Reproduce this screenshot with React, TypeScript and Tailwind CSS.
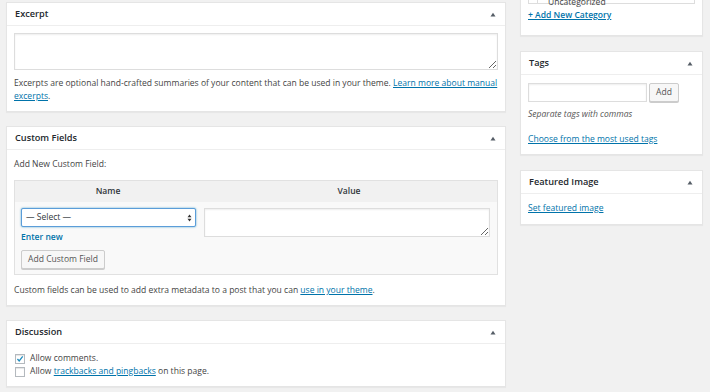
import React from "react";

const FONT = { fontFamily: '"Open Sans", "Noto Sans", sans-serif' };

function Toggle() {
  return (
    <svg width="6" height="5" viewBox="0 0 6 5" className="block">
      <path d="M0.5 4.5 L3 0.8 L5.5 4.5 Z" fill="#555d66" />
    </svg>
  );
}

function Panel({ title, children, className = "" }: { title?: string; children: React.ReactNode; className?: string }) {
  return (
    <div className={`border border-[#e5e5e5] bg-white shadow-[0_1px_1px_rgba(0,0,0,0.04)] ${className}`}>
      {title && (
        <div className="h-[23px] border-b border-[#eeeeee] pl-[8px] pr-[9px] flex items-center justify-between">
          <span className="text-[9.2px] font-semibold text-[#23282d] leading-none">{title}</span>
          <Toggle />
        </div>
      )}
      {children}
    </div>
  );
}

function Link({ children }: { children: React.ReactNode }) {
  return <a className="text-[#0073aa] underline decoration-[0.5px] underline-offset-[1px]">{children}</a>;
}

function Checkbox({ checked }: { checked?: boolean }) {
  return (
    <span className="inline-flex w-[10px] h-[10px] border border-[#b4b9be] bg-white shadow-[inset_0_1px_1px_rgba(0,0,0,0.1)] mr-[5px] items-center justify-center shrink-0">
      {checked && (
        <svg width="10" height="10" viewBox="0 0 10 10" className="block">
          <path d="M1.8 5 L4 7.4 L8.4 1.8" stroke="#1e8cbe" strokeWidth="1.6" fill="none" />
        </svg>
      )}
    </span>
  );
}

export default function App() {
  return (
    <div style={FONT} className="w-[710px] h-[392px] overflow-hidden bg-[#f1f1f1] flex text-[8.55px] leading-[13px] text-[#444]">
      {/* Left column */}
      <div className="w-[500px] ml-[6px] pt-[2px] flex flex-col">
        <Panel title="Excerpt">
          <div className="px-[7px] pt-[7px] pb-[8px]">
            <textarea className="block w-full h-[37px] border border-[#dddddd] shadow-[inset_0_1px_2px_rgba(0,0,0,0.07)] bg-white outline-none" />
            <p className="mt-[7px]">
              Excerpts are optional hand-crafted summaries of your content that can be used in your theme.{" "}
              <Link>Learn more about manual excerpts</Link>.
            </p>
          </div>
        </Panel>

        <Panel title="Custom Fields" className="mt-[14px]">
          <div className="px-[7px] pt-[8px] pb-[8px]">
            <div>Add New Custom Field:</div>
            <div className="mt-[9px] border border-[#e1e1e1] bg-[#f9f9f9]">
              <div className="flex h-[21px] bg-[#f1f1f1] font-semibold text-[#32373c] items-center">
                <div className="w-[186px] text-center">Name</div>
                <div className="flex-1 text-center">Value</div>
              </div>
              <div className="flex pt-[6px] pb-[5px]">
                <div className="w-[186px] pl-[6px] pr-[4px]">
                  <div className="h-[19px] w-[175px] border border-[#5b9dd9] rounded-[2px] shadow-[0_0_2px_rgba(30,140,190,0.8)] bg-white flex items-center justify-between pl-[4px] pr-[3px]">
                    <span className="text-[#32373c]">— Select —</span>
                    <svg width="5" height="8" viewBox="0 0 5 8" className="block">
                      <path d="M0.5 3.3 L2.5 0.5 L4.5 3.3 Z M0.5 4.7 L2.5 7.5 L4.5 4.7 Z" fill="#333" />
                    </svg>
                  </div>
                  <div className="mt-[4px] text-[#0073aa] font-semibold">Enter new</div>
                  <div className="mt-[6px] h-[19px] w-[84px] border border-[#cccccc] rounded-[2px] bg-[#f7f7f7] shadow-[0_1px_0_#cccccc] text-[#555] flex items-center justify-center">
                    Add Custom Field
                  </div>
                </div>
                <div className="flex-1 pl-[3px] pr-[7px]">
                  <textarea className="block w-[286px] h-[29px] border border-[#dddddd] shadow-[inset_0_1px_2px_rgba(0,0,0,0.07)] bg-white outline-none" />
                </div>
              </div>
            </div>
            <p className="mt-[9px]">
              Custom fields can be used to add extra metadata to a post that you can <Link>use in your theme</Link>.
            </p>
          </div>
        </Panel>

        <Panel title="Discussion" className="mt-[14px]">
          <div className="px-[8px] pt-[8px] pb-[8px]">
            <div className="flex items-center h-[13px]">
              <Checkbox checked />
              <span>Allow comments.</span>
            </div>
            <div className="flex items-center h-[13px]">
              <Checkbox />
              <span>
                Allow <Link>trackbacks and pingbacks</Link> on this page.
              </span>
            </div>
          </div>
        </Panel>
      </div>

      {/* Right column */}
      <div className="w-[183px] ml-[14px] flex flex-col">
        <Panel className="mt-[-45px]">
          <div className="px-[7px] pt-[8px] pb-[13px]">
            <div className="h-[40px] border border-[#dddddd] bg-white flex items-end">
              <div className="w-[9px] h-full border-r border-[#dddddd]" />
              <span className="ml-[10px] mb-[-6px] text-[#444]">Uncategorized</span>
            </div>
            <div className="mt-[5px] font-semibold">
              <Link>+ Add New Category</Link>
            </div>
          </div>
        </Panel>

        <Panel title="Tags" className="mt-[15px]">
          <div className="px-[7px] pt-[8px] pb-[8px]">
            <div className="flex items-center gap-[2px]">
              <div className="w-[119px] h-[19px] border border-[#dddddd] bg-white shadow-[inset_0_1px_2px_rgba(0,0,0,0.07)]" />
              <div className="w-[30px] h-[19px] border border-[#cccccc] rounded-[2px] bg-[#f7f7f7] shadow-[0_1px_0_#cccccc] text-[#555] flex items-center justify-center">
                Add
              </div>
            </div>
            <p className="mt-[6px] italic text-[#555]">Separate tags with commas</p>
            <p className="mt-[12px]">
              <Link>Choose from the most used tags</Link>
            </p>
          </div>
        </Panel>

        <Panel title="Featured Image" className="mt-[15px]">
          <div className="px-[7px] pt-[8px] pb-[9px]">
            <Link>Set featured image</Link>
          </div>
        </Panel>
      </div>
    </div>
  );
}
